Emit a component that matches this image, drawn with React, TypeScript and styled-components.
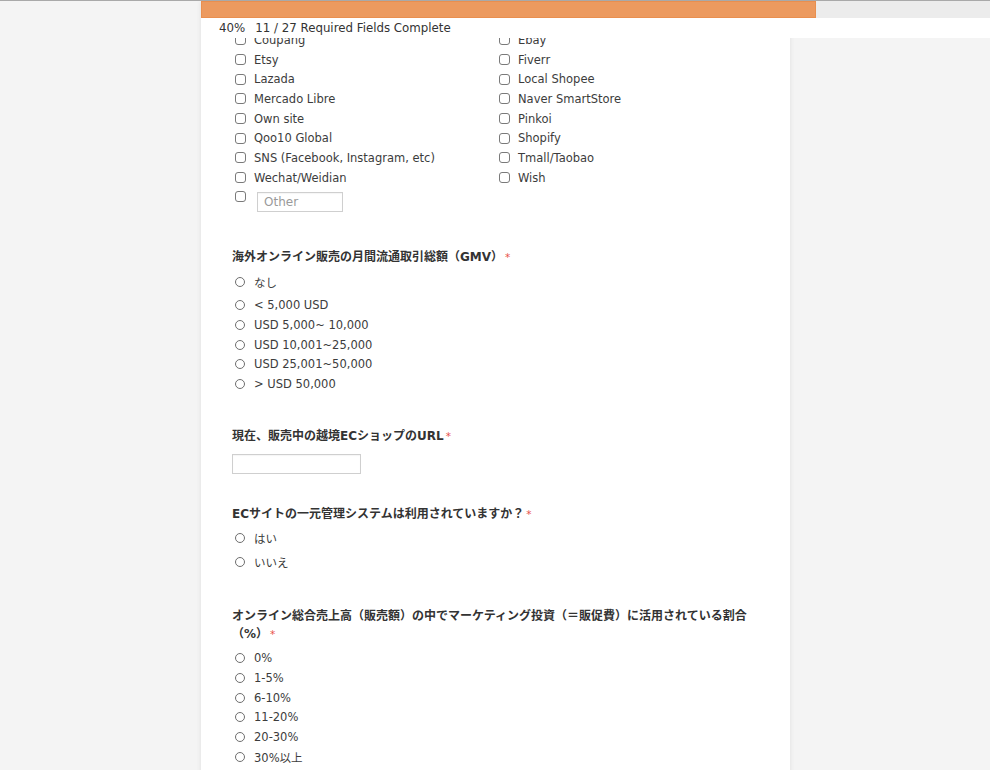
import * as React from 'react';
import styled, { createGlobalStyle } from 'styled-components';

const GlobalStyle = createGlobalStyle`
  html, body {
    margin: 0;
    padding: 0;
  }
  body {
    background: #f4f4f4;
    border-top: 1px solid #a9a9a9;
    font-family: "DejaVu Sans", "Noto Sans CJK JP", sans-serif;
    color: #333;
    overflow: hidden;
  }
`;

const Header = styled.div`
  position: fixed;
  top: 1px;
  left: 201px;
  right: 0;
  z-index: 10;
`;

const Track = styled.div`
  height: 17px;
  background: #ececec;
`;

const Fill = styled.div`
  height: 100%;
  box-sizing: border-box;
  background: #ec9a5f;
  border: 1px solid #e98f4f;
`;

const Status = styled.div`
  display: flex;
  gap: 10px;
  height: 20px;
  padding-left: 18px;
  background: #fff;
  font-size: 11.8px;
  line-height: 21px;
  color: #333;
`;

const Card = styled.main`
  margin-left: 201px;
  width: 589px;
  min-height: 100vh;
  box-sizing: border-box;
  padding: 29px 31px 40px;
  background: #fff;
  box-shadow: 0 0 5px rgba(0, 0, 0, 0.09);
`;

const ChoiceGrid = styled.div`
  display: grid;
  grid-template-columns: 264px 1fr;
  padding-left: 3px;
`;

const Option = styled.label<{ $tall?: boolean }>`
  display: flex;
  align-items: center;
  gap: 9px;
  height: ${(p) => (p.$tall ? '24px' : '19.7px')};
  padding-bottom: ${(p) => (p.$tall ? '4px' : '0')};
  box-sizing: border-box;
  padding-left: 3px;
  font-size: 11.5px;
  color: #3c3c3c;
  white-space: nowrap;
`;

const GridOption = styled(Option)`
  padding-left: 0;
  gap: 8px;
`;

const OtherRow = styled.div`
  display: flex;
  align-items: flex-start;
  gap: 11px;
  height: 28px;
  grid-column: 1 / -1;
`;

const Box = styled.span<{ $offset?: number }>`
  flex: none;
  width: 11px;
  height: 11px;
  box-sizing: border-box;
  border: 1px solid #7a7a7a;
  border-radius: 3px;
  background: #fff;
  margin-top: ${(p) => p.$offset ?? 0}px;
`;

const Radio = styled.span`
  flex: none;
  width: 10px;
  height: 10px;
  box-sizing: border-box;
  border: 1px solid #6e6e6e;
  border-radius: 50%;
  background: #fff;
`;

const TextInput = styled.input<{ $w: number }>`
  width: ${(p) => p.$w}px;
  height: 20px;
  box-sizing: border-box;
  margin: 0;
  padding: 0 6px;
  border: 1px solid #cfcfcf;
  box-shadow: inset 0 1px 1px rgba(0, 0, 0, 0.04);
  font-family: inherit;
  font-size: 12px;
  color: #333;
  outline: none;

  &::placeholder {
    color: #9a9a9a;
  }
`;

const OtherInput = styled(TextInput)`
  margin-top: 4px;
`;

const Question = styled.section<{ $top?: number }>`
  margin-top: ${(p) => p.$top ?? 31.5}px;
`;

const Title = styled.div<{ $gap?: number }>`
  font-size: 12px;
  font-weight: bold;
  line-height: 18px;
  color: #333;
  margin-bottom: ${(p) => p.$gap ?? 5}px;
`;

const Star = styled.span`
  color: #e8504a;
  font-size: 10.5px;
  font-weight: normal;
  margin-left: 2px;
`;

const platforms = [
  'Coupang',
  'Ebay',
  'Etsy',
  'Fiverr',
  'Lazada',
  'Local Shopee',
  'Mercado Libre',
  'Naver SmartStore',
  'Own site',
  'Pinkoi',
  'Qoo10 Global',
  'Shopify',
  'SNS (Facebook, Instagram, etc)',
  'Tmall/Taobao',
  'Wechat/Weidian',
  'Wish',
];

const gmv = ['< 5,000 USD', 'USD 5,000~ 10,000', 'USD 10,001~25,000', 'USD 25,001~50,000', '> USD 50,000'];

const ratios = ['0%', '1-5%', '6-10%', '11-20%', '20-30%', '30%以上'];

const RadioOption = ({ label, tall }: { label: string; tall?: boolean }) => (
  <Option $tall={tall}>
    <Radio />
    {label}
  </Option>
);

export default function App() {
  return (
    <>
      <GlobalStyle />
      <Header>
        <Track>
          <Fill style={{ width: 615 }} />
        </Track>
        <Status>
          <span>40%</span>
          <span>11 / 27 Required Fields Complete</span>
        </Status>
      </Header>

      <Card>
        <ChoiceGrid>
          {platforms.map((p) => (
            <GridOption key={p}>
              <Box />
              {p}
            </GridOption>
          ))}
          <OtherRow>
            <Box $offset={3} />
            <OtherInput $w={86} placeholder="Other" />
          </OtherRow>
        </ChoiceGrid>

        <Question $top={32}>
          <Title $gap={6}>
            海外オンライン販売の月間流通取引総額（GMV）
            <Star>*</Star>
          </Title>
          <RadioOption label="なし" tall />
          {gmv.map((g) => (
            <RadioOption key={g} label={g} />
          ))}
        </Question>

        <Question $top={33.5}>
          <Title $gap={8}>
            現在、販売中の越境ECショップのURL
            <Star>*</Star>
          </Title>
          <TextInput $w={129} />
        </Question>

        <Question $top={30.5}>
          <Title>
            ECサイトの一元管理システムは利用されていますか？
            <Star>*</Star>
          </Title>
          <RadioOption label="はい" tall />
          <RadioOption label="いいえ" tall />
        </Question>

        <Question $top={31.5}>
          <Title $gap={5}>
            オンライン総合売上高（販売額）の中でマーケティング投資（＝販促費）に活用されている割合（%）
            <Star>*</Star>
          </Title>
          {ratios.map((r) => (
            <RadioOption key={r} label={r} />
          ))}
        </Question>
      </Card>
    </>
  );
}
